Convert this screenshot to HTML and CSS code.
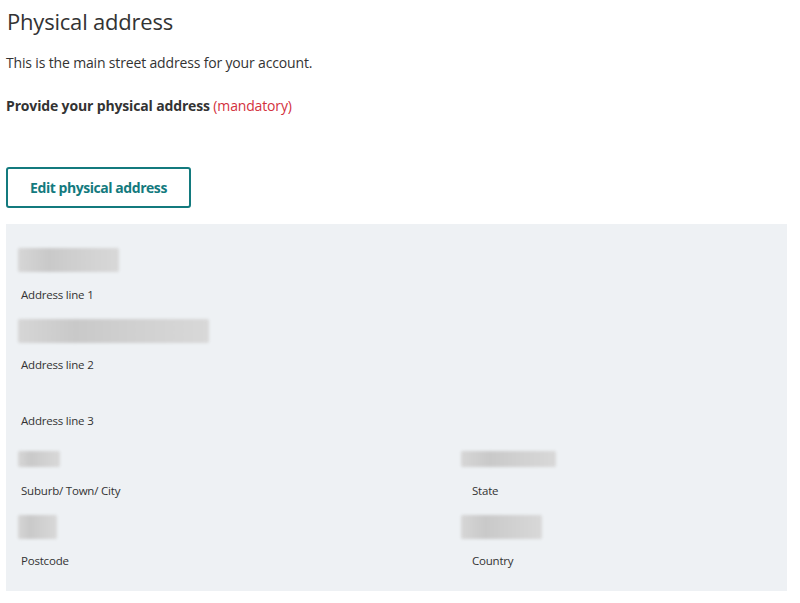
FILE: index.html
```html
<!DOCTYPE html>
<html lang="en">
<head>
<meta charset="utf-8">
<title>Physical address</title>
<link rel="stylesheet" href="styles.css">
</head>
<body>
<main class="page">
  <h1 class="title">Physical address</h1>
  <p class="intro">This is the main street address for your account.</p>
  <p class="prompt"><strong>Provide your physical address</strong> <span class="mandatory">(mandatory)</span></p>
  <button class="edit-btn" type="button">Edit physical address</button>
  <section class="panel">
    <div class="field full">
      <div class="value"><span class="blur w100"></span></div>
      <div class="label">Address line 1</div>
    </div>
    <div class="field full">
      <div class="value"><span class="blur w190"></span></div>
      <div class="label">Address line 2</div>
    </div>
    <div class="field full">
      <div class="value empty"></div>
      <div class="label">Address line 3</div>
    </div>
    <div class="field">
      <div class="value"><span class="blur w42 thin"></span></div>
      <div class="label">Suburb/ Town/ City</div>
    </div>
    <div class="field right">
      <div class="value"><span class="blur w95 thin"></span></div>
      <div class="label">State</div>
    </div>
    <div class="field">
      <div class="value"><span class="blur w40"></span></div>
      <div class="label">Postcode</div>
    </div>
    <div class="field right">
      <div class="value"><span class="blur w80"></span></div>
      <div class="label">Country</div>
    </div>
  </section>
</main>
</body>
</html>
```

FILE: styles.css
```css
* { box-sizing: border-box; }
html, body { margin: 0; padding: 0; background: #ffffff; }
body {
  font-family: "Open Sans", "Noto Sans", "Liberation Sans", sans-serif;
  color: #333333;
}
.page { padding: 0 13px 0 6px; }
.title {
  margin: 7px 0 0 1px;
  font-size: 22px;
  line-height: 28px;
  font-weight: 400;
  letter-spacing: -0.2px;
  color: #333;
}
.intro {
  margin: 18px 0 0;
  font-size: 14px;
  line-height: 20px;
  letter-spacing: -0.16px;
}
.prompt {
  margin: 23px 0 0;
  font-size: 14px;
  line-height: 20px;
  letter-spacing: -0.15px;
}
.prompt strong { font-weight: 700; color: #333; }
.mandatory { color: #d3313d; }
.edit-btn {
  display: block;
  margin-top: 51px;
  width: 185px;
  height: 41px;
  padding: 0;
  border: 2px solid #137a7e;
  border-radius: 3px;
  background: #ffffff;
  color: #137a7e;
  font-family: inherit;
  font-size: 14px;
  font-weight: 700;
  letter-spacing: -0.45px;
}
.panel {
  margin-top: 16px;
  background: #eef1f4;
  padding: 24px 12px 6px;
  display: grid;
  grid-template-columns: 451px 1fr;
}
.field { padding-bottom: 16px; }
.field.full { grid-column: 1 / -1; }
.field.full:first-child .value { margin-bottom: 15px; }
.value {
  display: flow-root;
  height: 24px;
  margin-bottom: 14px;
}
.value.empty { height: 10px; }
.label {
  font-size: 11.5px;
  line-height: 16px;
  letter-spacing: -0.2px;
  padding-left: 3px;
  color: #333;
}
.right .blur { margin-left: -8px; }
.blur {
  display: block;
  height: 24px;
  border-radius: 2px;
  background: linear-gradient(90deg, #d6d6d6 0%, #c9c9c9 30%, #d0d0d0 60%, #d8d8d8 100%);
  filter: blur(1.5px);
}
.blur.thin { height: 16px; margin-top: 6px; }
.w100 { width: 101px; }
.w190 { width: 191px; }
.w42 { width: 42px; }
.w95 { width: 95px; }
.w40 { width: 39px; }
.w80 { width: 81px; }
```
